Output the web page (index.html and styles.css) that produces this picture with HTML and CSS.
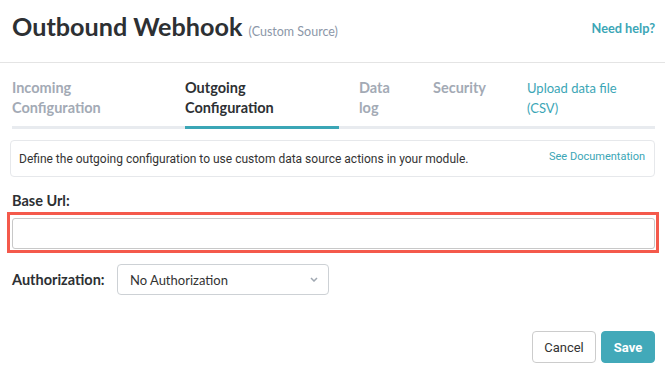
FILE: index.html
```html
<!DOCTYPE html>
<html lang="en">

<head>
    <meta charset="UTF-8">
    <title>Outbound Webhook</title>
    <link rel="stylesheet" href="styles.css">
</head>

<body>
    <div class="header">
        <h1 class="title">Outbound Webhook <span class="sub">(Custom Source)</span></h1>
        <a class="help">Need help?</a>
    </div>

    <div class="content">
        <ul class="tabs">
            <li class="tab-incoming">Incoming Configuration</li>
            <li class="tab-outgoing active">Outgoing Configuration</li>
            <li class="tab-data">Data log</li>
            <li class="tab-security">Security</li>
            <li class="tab-upload">Upload data file (CSV)</li>
        </ul>

        <div class="info">
            <span>Define the outgoing configuration to use custom data source actions in your module.</span>
            <a class="doc">See Documentation</a>
        </div>

        <div class="label url-label">Base Url:</div>
        <div class="highlight">
            <input class="field" type="text">
        </div>

        <div class="auth">
            <span class="label">Authorization:</span>
            <div class="select">
                <span>No Authorization</span>
                <svg width="8" height="5" viewBox="0 0 8 5"><path d="M1 1 L4 4 L7 1" fill="none" stroke="#a0a8b2" stroke-width="1.5"/></svg>
            </div>
        </div>

        <div class="actions">
            <button class="btn cancel">Cancel</button>
            <button class="btn save">Save</button>
        </div>
    </div>
</body>

</html>
```

FILE: styles.css
```css
*{
    margin: 0;
    padding: 0;
    box-sizing: border-box;
}
li{
    list-style: none;
}
body{
    background-color: #fff;
    font-family: Lato, "Open Sans", sans-serif;
    color: #333;
    width: 665px;
}
.header{
    display: flex;
    justify-content: space-between;
    align-items: flex-start;
    height: 63px;
    padding: 11px 10px 0 12px;
    border-bottom: 1px solid #e4e4e4;
}
.title{
    font-size: 25.2px;
    line-height: 30px;
    font-weight: 700;
    color: #2d3033;
}
.title .sub{
    font-size: 12.5px;
    font-weight: 400;
    color: #8c97a8;
}
.help{
    font-size: 12.75px;
    line-height: 16px;
    font-weight: 700;
    color: #3ba6b6;
    margin-top: 9px;
}
.content{
    padding: 15px 10px 0 12px;
}
.tabs{
    display: flex;
    border-bottom: 3px solid #e8ebef;
}
.tabs li{
    font-size: 14.5px;
    font-weight: 700;
    line-height: 20px;
    color: #a3aab5;
    padding-bottom: 8px;
    margin-bottom: -3px;
    border-bottom: 3px solid transparent;
}
.tabs .active{
    color: #2d3033;
    border-bottom-color: #3ba6b6;
}
.tab-incoming{
    width: 153px;
    padding-right: 20px;
    margin-right: 20px;
}
.tab-outgoing{
    width: 154px;
    padding-right: 20px;
    margin-right: 20px;
}
.tab-data{
    width: 40px;
    margin-right: 34px;
}
.tab-security{
    width: 74px;
    margin-right: 20px;
}
.tabs .tab-upload{
    width: 125px;
    padding-right: 22px;
    font-size: 13px;
    font-weight: 400;
    color: #3ba6b6;
}
.info{
    display: flex;
    justify-content: space-between;
    align-items: center;
    margin: 11px 0 0 -2px;
    height: 37px;
    padding: 0 9px 0 8px;
    border: 1px solid #e6e8eb;
    border-radius: 4px;
    font-family: Roboto, sans-serif;
    font-size: 12px;
    color: #333;
}
.info .doc{
    font-size: 11px;
    color: #3ba6b6;
    margin-top: -4px;
}
.label{
    font-size: 14.5px;
    line-height: 17px;
    font-weight: 700;
    color: #2d3033;
}
.url-label{
    margin-top: 15px;
}
.highlight{
    margin: 3px 0 0 -5px;
    width: 652px;
    border: 3px solid #f4594b;
    padding: 3px 1px 1px 2px;
}
.field{
    display: block;
    width: 643px;
    height: 31px;
    border: 1px solid #c8c8c8;
    border-radius: 3px;
    background: #fff;
}
.auth{
    display: flex;
    align-items: center;
    margin-top: 11px;
}
.auth .label{
    width: 105px;
}
.select{
    display: flex;
    justify-content: space-between;
    align-items: center;
    width: 212px;
    height: 31px;
    padding: 0 10px 0 12px;
    border: 1px solid #cdd1d5;
    border-radius: 4px;
    font-size: 13px;
    color: #333;
}
.actions{
    display: flex;
    justify-content: flex-end;
    gap: 5px;
    margin-top: 36px;
}
.btn{
    height: 32px;
    border-radius: 4px;
    font-family: Roboto, sans-serif;
    font-size: 13px;
}
.cancel{
    width: 64px;
    background: #fff;
    border: 1px solid #ccc;
    color: #333;
}
.save{
    width: 54px;
    background: #42a9b9;
    border: 1px solid #42a9b9;
    color: #fff;
    font-weight: 700;
}
```
